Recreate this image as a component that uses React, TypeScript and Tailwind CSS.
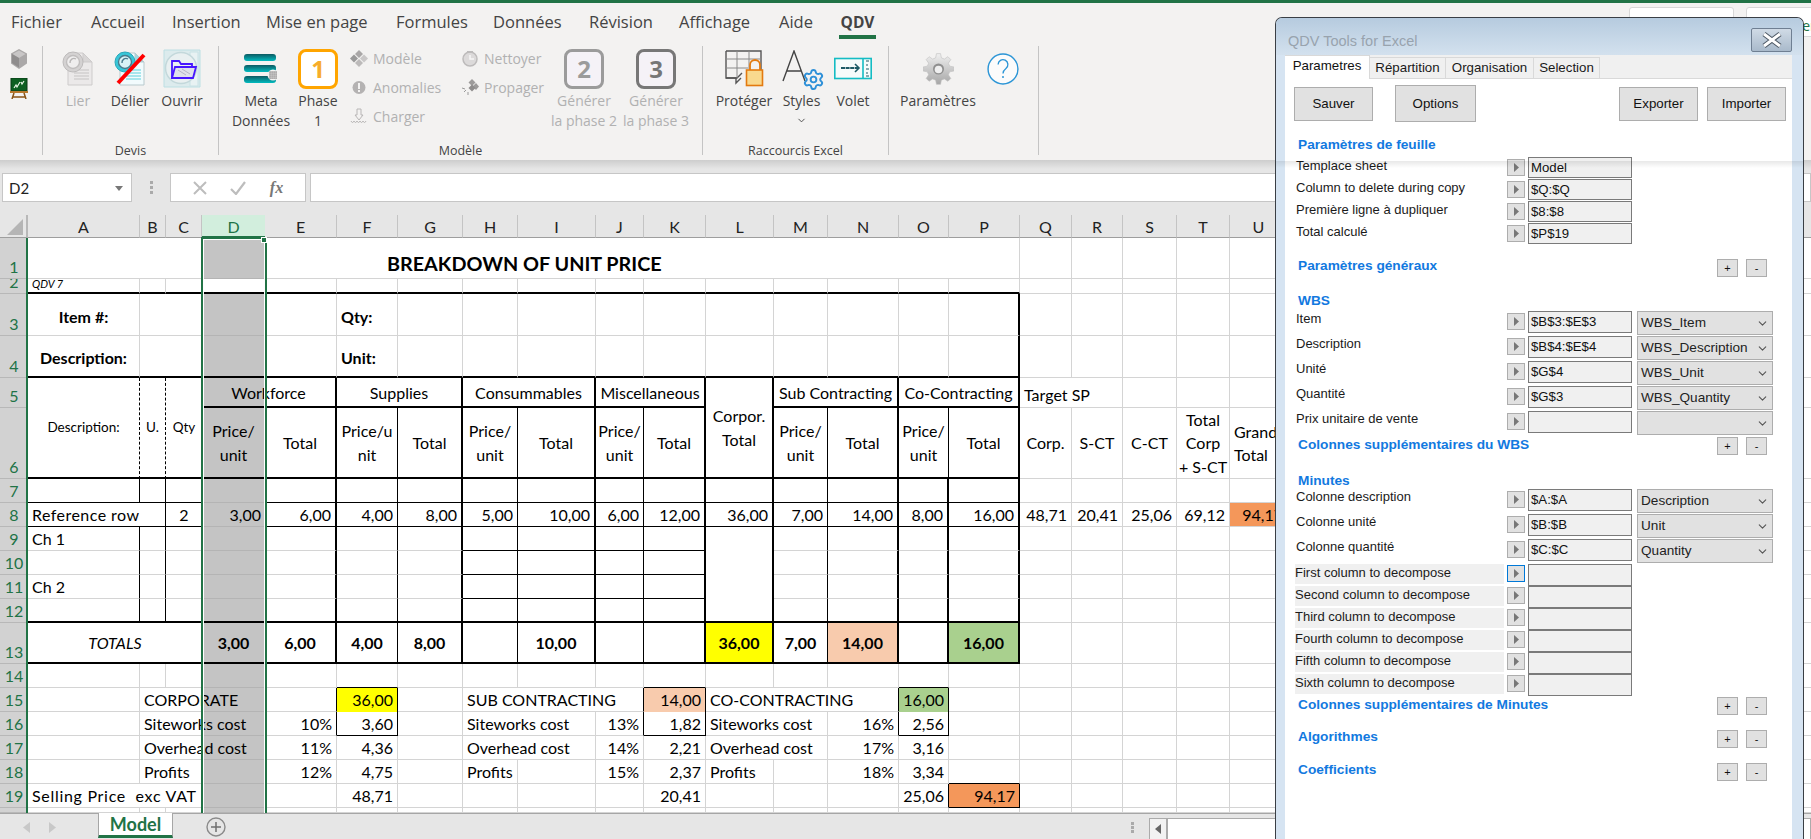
import React from 'react';
import { ChevronDown, Settings } from 'lucide-react';

type Cell = { t?: string; r?: string; b?: string; a?: 'l' | 'r' | 'c'; cls?: string; span?: number; tall?: boolean };
type RowDef = Record<string, Cell>;

const RM: Record<string, string> = {
  g: 'border-r border-r-[#d4d4d4]',
  k: 'border-r border-r-black',
  K: 'border-r-2 border-r-black',
  n: '',
  d: 'border-r border-r-black [border-right-style:dashed]',
};
const BM: Record<string, string> = {
  g: 'border-b border-b-[#d4d4d4]',
  k: 'border-b border-b-black',
  K: 'border-b-2 border-b-black',
  n: '',
  s: 'border-b border-b-[#b4b4b4]',
};
const AM = { l: 'justify-start text-left', r: 'justify-end text-right', c: 'justify-center text-center' };
const SPAN: Record<number, string> = { 2: 'col-span-2', 3: 'col-span-3', 12: 'col-span-12' };
const COLS = 'ABCDEFGHIJKLMNOPQRSTU'.split('');
const VERT: Record<string, string> = { A: 'k', B: 'k', C: 'n', D: 'n', E: 'K', F: 'k', G: 'K', H: 'k', I: 'K', J: 'k', K: 'K', L: 'K', M: 'k', N: 'K', O: 'K', P: 'K' };

const band = (bottom: string, over: RowDef = {}): RowDef => {
  const res: RowDef = {};
  'ABCDEFGHIJKLMNOP'.split('').forEach((c) => {
    res[c] = { r: VERT[c], b: c === 'D' && bottom !== 'K' ? 's' : bottom };
  });
  Object.keys(over).forEach((k) => {
    res[k] = { ...res[k], ...over[k] };
  });
  return res;
};

const v = (t: string, extra: Cell = {}): Cell => ({ t, a: 'r', ...extra });
const bold = 'font-bold pt-[1px]';
const boldLow = 'font-bold pt-[4px]';
const priceUnit = 'Price/\nunit';

const midLines: RowDef = { H: { b: 'k' }, I: { b: 'k' }, J: { b: 'k' }, K: { b: 'k' }, L: { b: 'n' } };
const grey = (bot: RowDef) => band('g', bot);

const SHEET: { h: string; n: string; def: RowDef; noCols?: string[] }[] = [
  { h: '1', n: '1', def: { A: { span: 3, r: 'n' }, E: { span: 12, t: 'BREAKDOWN OF UNIT PRICE', a: 'l', cls: 'pl-[122px] pt-[12px] font-bold text-[19.8px]' } } },
  {
    h: '2', n: '2',
    def: {
      A: { t: 'QDV 7', a: 'l', cls: 'italic text-[11px] pb-[3px]', b: 'K' }, B: { b: 'K' }, C: { b: 'K', r: 'n' }, D: { b: 'K', cls: 'bg-white' }, E: { b: 'K' }, F: { b: 'K' }, G: { b: 'K' }, H: { b: 'K' }, I: { b: 'K' }, J: { b: 'K' }, K: { b: 'K' }, L: { b: 'K' }, M: { b: 'K' }, N: { b: 'K' }, O: { b: 'K' }, P: { b: 'K' },
    },
  },
  { h: '3', n: '3', def: { A: { t: 'Item #:', a: 'c', cls: boldLow }, B: { span: 2, r: 'n' }, F: { t: 'Qty:', a: 'l', cls: boldLow }, P: { r: 'K' } } },
  {
    h: '4', n: '4',
    def: {
      A: { t: 'Description:', a: 'c', cls: boldLow, b: 'K' }, B: { span: 2, r: 'n', b: 'K' }, D: { b: 'K' }, E: { b: 'K' }, F: { t: 'Unit:', a: 'l', cls: boldLow, b: 'K' }, G: { b: 'K' }, H: { b: 'K' }, I: { b: 'K' }, J: { b: 'K' }, K: { b: 'K' }, L: { b: 'K' }, M: { b: 'K' }, N: { b: 'K' }, O: { b: 'K' }, P: { r: 'K', b: 'K' },
    },
  },
  {
    h: '5', n: '5',
    def: {
      A: { t: 'Description:', a: 'c', tall: true, r: 'd', b: 'K', cls: 'text-[13.5px]' },
      B: { t: 'U.', a: 'c', tall: true, r: 'd', b: 'K', cls: 'text-[13.5px]' },
      C: { t: 'Qty', a: 'c', tall: true, r: 'n', b: 'K', cls: 'text-[13.5px]' },
      D: { t: 'Workforce', a: 'c', span: 2, r: 'K', b: 'K', cls: 'pt-[1px] bg-[linear-gradient(to_right,#c4c4c4_63px,transparent_63px)]' },
      F: { t: 'Supplies', a: 'c', span: 2, r: 'K', b: 'K', cls: 'pt-[1px]' },
      H: { t: 'Consummables', a: 'c', span: 2, r: 'K', b: 'K', cls: 'pt-[1px]' },
      J: { t: 'Miscellaneous', a: 'c', span: 2, r: 'K', b: 'K', cls: 'pt-[1px]' },
      L: { t: 'Corpor.\nTotal', a: 'c', tall: true, r: 'K', b: 'K' },
      M: { t: 'Sub Contracting', a: 'c', span: 2, r: 'K', b: 'K', cls: 'pt-[1px]' },
      O: { t: 'Co-Contracting', a: 'c', span: 2, r: 'K', b: 'K', cls: 'pt-[1px]' },
      Q: { t: 'Target SP', a: 'l', r: 'n', cls: 'pt-[5px]' },
    },
  },
  {
    h: '6', n: '6', noCols: ['A', 'B', 'C', 'L'],
    def: {
      D: { t: priceUnit, a: 'c', r: 'n', b: 'K' }, E: { t: 'Total', a: 'c', r: 'K', b: 'K' },
      F: { t: 'Price/u\nnit', a: 'c', r: 'k', b: 'K' }, G: { t: 'Total', a: 'c', r: 'K', b: 'K' },
      H: { t: priceUnit, a: 'c', r: 'k', b: 'K' }, I: { t: 'Total', a: 'c', r: 'K', b: 'K' },
      J: { t: priceUnit, a: 'c', r: 'k', b: 'K' }, K: { t: 'Total', a: 'c', r: 'K', b: 'K' },
      M: { t: priceUnit, a: 'c', r: 'k', b: 'K' }, N: { t: 'Total', a: 'c', r: 'K', b: 'K' },
      O: { t: priceUnit, a: 'c', r: 'k', b: 'K' }, P: { t: 'Total', a: 'c', r: 'K', b: 'K' },
      Q: { t: 'Corp.', a: 'c' }, R: { t: 'S-CT', a: 'c' }, S: { t: 'C-CT', a: 'c' }, T: { t: 'Total\nCorp\n+ S-CT', a: 'c' }, U: { t: 'Grand\nTotal', a: 'l' },
    },
  },
  { h: '7', n: '7', def: band('k', { O: { r: 'K' } }) },
  {
    h: '8', n: '8',
    def: band('k', {
      A: { t: 'Reference row', a: 'l', span: 2, r: 'k', cls: 'tracking-[0.45px]' }, C: { t: '2', a: 'c' }, D: v('3,00'), E: v('6,00'), F: v('4,00'), G: v('8,00'), H: v('5,00'), I: v('10,00'), J: v('6,00'), K: v('12,00'), L: v('36,00'), M: v('7,00'), N: v('14,00'), O: v('8,00'), P: v('16,00'),
      Q: v('48,71'), R: v('20,41'), S: v('25,06'), T: v('69,12'), U: { t: '94,17', a: 'r', cls: 'bg-[#f4975a]' },
    }),
  },
  { h: '9', n: '9', def: grey({ A: { t: 'Ch 1', a: 'l' }, ...midLines }) },
  { h: '10', n: '10', def: grey(midLines) },
  { h: '11', n: '11', def: grey({ A: { t: 'Ch 2', a: 'l' }, ...midLines }) },
  { h: '12', n: '12', def: band('K', {}) },
  {
    h: '13', n: '13',
    def: band('K', {
      A: { t: 'TOTALS', a: 'c', span: 3, r: 'n', cls: 'italic' },
      D: { t: '3,00', a: 'c', cls: bold }, E: { t: '6,00', a: 'c', cls: bold }, F: { t: '4,00', a: 'c', cls: bold }, G: { t: '8,00', a: 'c', cls: bold }, I: { t: '10,00', a: 'c', cls: bold },
      L: { t: '36,00', a: 'c', cls: 'font-bold pt-[1px] bg-[#ffff00]' }, M: { t: '7,00', a: 'c', cls: bold }, N: { t: '14,00', a: 'c', cls: 'font-bold pt-[1px] bg-[#f8cbad]' }, P: { t: '16,00', a: 'c', cls: 'font-bold pt-[1px] bg-[#a9d08e]' },
    }),
  },
  { h: '14', n: '14', def: { C: { r: 'n' }, F: { b: 'k' }, K: { b: 'k' }, O: { b: 'k' } } },
  {
    h: '15', n: '15',
    def: {
      B: { t: 'CORPORATE', a: 'l', r: 'n' }, C: { r: 'n' }, E: { r: 'k' }, F: { t: '36,00', a: 'r', r: 'k', b: 'n', cls: 'bg-[#ffff00]' },
      G: { r: 'g' }, H: { t: 'SUB CONTRACTING', a: 'l', r: 'n' }, I: { r: 'n' }, J: { r: 'k' }, K: { t: '14,00', a: 'r', r: 'k', b: 'n', cls: 'bg-[#f8cbad]' },
      L: { t: 'CO-CONTRACTING', a: 'l', r: 'n' }, M: { r: 'n' }, N: { r: 'k' }, O: { t: '16,00', a: 'r', r: 'k', b: 'n', cls: 'bg-[#a9d08e]' },
    },
  },
  {
    h: '16', n: '16',
    def: {
      B: { t: 'Siteworks cost', a: 'l', r: 'n' }, C: { r: 'n' }, E: { t: '10%', a: 'r', r: 'k' }, F: { t: '3,60', a: 'r', r: 'k', b: 'k' },
      H: { t: 'Siteworks cost', a: 'l', r: 'n' }, J: { t: '13%', a: 'r', r: 'k' }, K: { t: '1,82', a: 'r', r: 'k', b: 'k' },
      L: { t: 'Siteworks cost', a: 'l', r: 'n' }, N: { t: '16%', a: 'r', r: 'k' }, O: { t: '2,56', a: 'r', r: 'k', b: 'k' },
    },
  },
  {
    h: '17', n: '17',
    def: {
      B: { t: 'Overhead cost', a: 'l', r: 'n' }, C: { r: 'n' }, E: v('11%'), F: v('4,36'),
      H: { t: 'Overhead cost', a: 'l', r: 'n' }, J: v('14%'), K: v('2,21'),
      L: { t: 'Overhead cost', a: 'l', r: 'n' }, N: v('17%'), O: v('3,16'),
    },
  },
  {
    h: '18', n: '18',
    def: {
      B: { t: 'Profits', a: 'l', r: 'n' }, C: { r: 'n' }, E: v('12%'), F: v('4,75'),
      H: { t: 'Profits', a: 'l' }, J: v('15%'), K: v('2,37'),
      L: { t: 'Profits', a: 'l' }, N: v('18%'), O: v('3,34'), P: { b: 'k' },
    },
  },
  {
    h: '19', n: '19',
    def: {
      A: { t: 'Selling Price  exc VAT', a: 'l', r: 'n', cls: 'tracking-[0.7px]' }, B: { r: 'n' }, C: { r: 'n' }, F: v('48,71'), K: v('20,41'), O: v('25,06', { r: 'k' }),
      P: { t: '94,17', a: 'r', r: 'k', b: 'k', cls: 'bg-[#f4975a]' },
    },
  },
  { h: '20', n: '', def: { C: { r: 'n' } } },
];

function SheetCells() {
  const out: React.ReactNode[] = [];
  out.push(
    <div key="corner" className="flex items-end justify-end pr-[3px] pb-[2px] bg-[#e6e6e6] border-b border-b-[#9e9e9e] border-r-2 border-r-[#b8b8b8]">
      <svg width="16" height="16" viewBox="0 0 16 16"><polygon points="16,0 16,16 0,16" fill="#b5b5b5" /></svg>
    </div>
  );
  COLS.forEach((c) => {
    const sel = c === 'D';
    out.push(
      <div key={'h' + c} className={sel ? 'flex items-center justify-center pt-[2px] text-[16px] bg-[#d2eedd] text-[#217346] border-b-2 border-b-[#217346]' : 'flex items-center justify-center pt-[2px] text-[16px] text-[#222] bg-[#e6e6e6] border-b border-b-[#9e9e9e] border-r border-r-[#c4c4c4]'}>
        {c}
      </div>
    );
  });
  out.push(<div key="hfill" className="bg-[#e6e6e6] border-b border-b-[#9e9e9e]" />);

  SHEET.forEach((row) => {
    out.push(
      <div key={'n' + row.h} className="flex items-end justify-center overflow-hidden bg-[#d2d2d2] text-[#217346] text-[16px] leading-[20px] pb-[1px] border-b border-b-[#b8b8b8]">
        {row.n}
      </div>
    );
    let i = 0;
    while (i < COLS.length) {
      const c = COLS[i];
      if (row.noCols && row.noCols.includes(c)) {
        i += 1;
        continue;
      }
      const isD = c === 'D';
      const d = row.def[c] || {};
      const r = d.r ?? (isD ? 'n' : 'g');
      const b = d.b ?? (isD ? 's' : 'g');
      const span = d.span ?? 1;
      const a = d.a ?? 'l';
      const gray = isD && span === 1 && !(d.cls && d.cls.includes('bg-white'));
      out.push(
        <div
          key={row.h + c}
          className={[
            'flex items-center px-[4px] min-w-0 leading-[23.5px]',
            AM[a],
            RM[r],
            BM[b],
            span > 1 ? SPAN[span] : '',
            d.tall ? 'row-span-2' : '',
            gray ? 'bg-[#c4c4c4]' : '',
            d.cls ?? '',
          ].join(' ')}
        >
          {d.t ? <span className="relative z-[1] whitespace-pre shrink-0">{d.t}</span> : null}
        </div>
      );
      i += span;
    }
    out.push(<div key={row.h + 'fill'} className="border-b border-b-[#d4d4d4]" />);
  });
  return <>{out}</>;
}

function gearPath(cx: number, cy: number, ro: number, ri: number, n: number) {
  let d = '';
  for (let k = 0; k < n; k++) {
    const s = (Math.PI * 2) / n;
    const a = k * s - Math.PI / 2;
    const pts = [
      [ri, a - s * 0.32],
      [ro, a - s * 0.17],
      [ro, a + s * 0.17],
      [ri, a + s * 0.32],
    ];
    pts.forEach((p, j) => {
      const x = (cx + p[0] * Math.cos(p[1])).toFixed(2);
      const y = (cy + p[0] * Math.sin(p[1])).toFixed(2);
      d += (k === 0 && j === 0 ? 'M' : 'L') + x + ' ' + y + ' ';
    });
  }
  return d + 'Z';
}

function DocIcon({ active }: { active: boolean }) {
  const paper = active ? '#f2fbfd' : '#ebe9e9';
  const edge = active ? '#b9c9cd' : '#cdcbcb';
  const line = active ? '#8fdfe8' : '#d2d0d0';
  const disc = active ? '#38c6d8' : '#d4d2d2';
  const inner = active ? '#d8f2f6' : '#efeeee';
  return (
    <svg width="32" height="35" viewBox="0 0 32 35">
      <path d="M6 2h15l9 9v23H6z" fill={paper} stroke={edge} />
      <path d="M21 2v9h9z" fill={active ? '#9ed8e0' : '#d8d6d6'} stroke={edge} />
      <path d="M12 19h15M12 22h15M12 25h15M12 28h15" stroke={line} strokeWidth="1.4" />
      <circle cx="11" cy="11" r="10" fill={disc} stroke={active ? '#2aa8ba' : '#bdbbbb'} />
      <circle cx="11" cy="11" r="6.5" fill={inner} stroke={active ? '#487a8c' : '#c0bebe'} strokeWidth="1.4" />
      <path d="M8 12a4 4 0 0 1 6-4" fill="none" stroke={active ? '#487a8c' : '#b8b6b6'} strokeWidth="1.4" />
      {active ? <line x1="4" y1="32" x2="30" y2="4" stroke="#ff0000" strokeWidth="4" /> : null}
    </svg>
  );
}

function FolderDoc() {
  return (
    <svg width="38" height="39" viewBox="0 0 38 39">
      <path d="M1 1h36v37H1z" fill="#dcebed" stroke="#bcdfe3" />
      <path d="M27 3h8v34h-8z" fill="#e8f2f3" stroke="#c8e2e5" />
      <circle cx="18" cy="19" r="15.5" fill="#e9f0f1" stroke="#c3d8db" strokeWidth="1.5" />
      <path d="M9 29V12h7l2 3h11v3" fill="none" stroke="#4616ff" strokeWidth="1.8" />
      <path d="M9 29l3-11h21l-3 11z" fill="#dfe0ea" stroke="#4616ff" strokeWidth="1.8" />
      <path d="M15 21l8 5M19 20l8 5" stroke="#b5b5c8" />
    </svg>
  );
}

function MetaIcon() {
  return (
    <svg width="35" height="30" viewBox="0 0 35 30">
      <defs>
        <linearGradient id="tl" x1="0" y1="0" x2="0" y2="1">
          <stop offset="0" stopColor="#0c5a62" />
          <stop offset="1" stopColor="#00bcc0" />
        </linearGradient>
      </defs>
      <rect x="0" y="0" width="32" height="7" rx="3" fill="url(#tl)" />
      <rect x="0" y="11" width="32" height="7" rx="3" fill="url(#tl)" />
      <rect x="0" y="22" width="32" height="7" rx="3" fill="url(#tl)" />
      <circle cx="29" cy="21" r="5.5" fill="#f3f2f1" />
      <g fill="#666">
        {[26, 28, 30, 32].map((x) => [18, 20, 22, 24].map((y) => <rect key={x + '-' + y} x={x - 0.6} y={y - 0.6} width="1.3" height="1.3" />))}
      </g>
    </svg>
  );
}

function Diamonds() {
  return (
    <svg width="18" height="17" viewBox="0 0 18 17" className="shrink-0">
      <g fill="#bcbaba">
        <path d="M9 0l4 4-4 4-4-4z" fill="#a9a7a7" />
        <path d="M4 4.5l4 4-4 4-4-4z" fill="#999" />
        <path d="M14 4.5l4 4-4 4-4-4z" fill="#c9c7c7" />
        <path d="M9 9l4 4-4 4-4-4z" />
      </g>
    </svg>
  );
}
function Warn() {
  return (
    <svg width="18" height="17" viewBox="0 0 18 17" className="shrink-0">
      <circle cx="9" cy="8.5" r="6.5" fill="#b4b2b2" />
      <rect x="8" y="4" width="2" height="6" fill="#f3f2f1" />
      <rect x="8" y="11" width="2" height="2" fill="#f3f2f1" />
    </svg>
  );
}
function Load() {
  return (
    <svg width="18" height="17" viewBox="0 0 18 17" className="shrink-0" fill="none" stroke="#b8b6b6">
      <path d="M7 1h4v6h2l-4 5-4-5h2z" />
      <path d="M1 13c1 2 2 2 3 0 1 2 2 2 3 0 1 2 2 2 3 0 1 2 2 2 3 0 1 2 2 2 3 0" />
    </svg>
  );
}
function Clean() {
  return (
    <svg width="18" height="17" viewBox="0 0 18 17" className="shrink-0">
      <circle cx="9" cy="9" r="7" fill="#dcdada" stroke="#bdbbbb" strokeWidth="1.5" />
      <path d="M6 1h6v2H6z" fill="#bdbbbb" />
      <path d="M9 5v4h4" fill="none" stroke="#f6f6f6" strokeWidth="1.5" />
    </svg>
  );
}
function Spread() {
  return (
    <svg width="18" height="17" viewBox="0 0 18 17" className="shrink-0">
      <g fill="#9d9b9b">
        <path d="M11 0l3.5 3.5L11 7 7.5 3.5z" />
        <path d="M15 4l3 3.5-3 3.5-3.5-3.5z" />
        <path d="M11 5.5l3.5 3.5L11 12.5 7.5 9z" fill="#8f8d8d" />
      </g>
      <path d="M1 9l3 1M3 13l2-2M7 16l0-3" stroke="#999" fill="none" />
    </svg>
  );
}

function Protect() {
  return (
    <svg width="39" height="37" viewBox="0 0 39 37">
      <path d="M1 1h35v22M1 1v27h11l5-5" fill="none" stroke="#555" strokeWidth="1.4" />
      <path d="M1 9h35M1 18h24M12 1v27M24 1v16" stroke="#8a8a8a" fill="none" />
      <path d="M1 28h10v5l5-5" fill="none" stroke="#555" strokeWidth="1.4" />
      <path d="M25 20v-5a5 5 0 0 1 10 0v5" fill="none" stroke="#e37a10" strokeWidth="1.8" />
      <rect x="21.5" y="20" width="16" height="15.5" fill="#f9d98e" stroke="#e37a10" strokeWidth="1.6" />
    </svg>
  );
}
function StylesIcon() {
  return (
    <div className="relative w-[40px] h-[38px]">
      <svg width="24" height="32" viewBox="0 0 24 32">
        <path d="M1 31L12 1l11 30M5 21h14" fill="none" stroke="#444" strokeWidth="1.4" />
      </svg>
      <Settings size={23} strokeWidth={2} className="absolute right-[-3px] bottom-[-3px] text-[#2e90d8]" />
    </div>
  );
}
function VoletIcon() {
  return (
    <svg width="38" height="23" viewBox="0 0 38 23">
      <rect x="0.8" y="1.5" width="36.4" height="20" fill="#f6fbfb" stroke="#14bcc4" strokeWidth="1.6" />
      <path d="M29 1v21" stroke="#14bcc4" strokeWidth="1.6" />
      <path d="M7 11h17" stroke="#1d5a66" strokeWidth="1.8" strokeDasharray="4 0.6" />
      <path d="M21 7l4 4-4 4" fill="none" stroke="#1d5a66" strokeWidth="1.6" />
      <path d="M32 4h3M32 8h2M32 12h3M32 16h2M32 19h3" stroke="#1d5a66" strokeWidth="1.2" />
    </svg>
  );
}
function GearIcon() {
  return (
    <svg width="31" height="32" viewBox="0 0 31 32">
      <defs>
        <linearGradient id="gg" x1="0" y1="0" x2="0" y2="1">
          <stop offset="0" stopColor="#f0f0f0" />
          <stop offset="1" stopColor="#a6a6a6" />
        </linearGradient>
      </defs>
      <path d={gearPath(15.5, 16, 15.5, 11.5, 8)} fill="url(#gg)" stroke="#c0c0c0" strokeWidth="0.6" />
      <circle cx="15.5" cy="16" r="5.5" fill="#8f8f8f" />
      <circle cx="15.5" cy="16.5" r="3.8" fill="#efefef" />
    </svg>
  );
}
function HelpIcon() {
  return (
    <svg width="36" height="36" viewBox="0 0 36 36">
      <circle cx="18" cy="18" r="16.8" fill="#fbfbfb" stroke="#2b95d6" strokeWidth="1.6" />
      <path d="M12.5 13a5.5 5.5 0 1 1 8.8 4.4C19 19.2 18 20.4 18 23" fill="none" stroke="#2b95d6" strokeWidth="1.5" />
      <circle cx="18" cy="27" r="1.1" fill="#2b95d6" />
    </svg>
  );
}
function Cube() {
  return (
    <svg width="18" height="20" viewBox="0 0 18 20">
      <path d="M9 0l8 4.5v10L9 20l-8-5.5v-10z" fill="#aaa8a8" />
      <path d="M9 1.5l6.5 3.5L9 9 2.5 5z" fill="#c8c6c6" />
      <path d="M9 9v9.5L2 14V5z" fill="#8f8d8d" />
    </svg>
  );
}
function Board() {
  return (
    <svg width="18" height="21" viewBox="0 0 18 21">
      <rect x="1" y="0" width="16" height="13" fill="#0d5f22" stroke="#0b3a16" />
      <path d="M4 10l2-3 1 2 3-5M11 4l1 2 2-3" fill="none" stroke="#e8f3e6" strokeWidth="1.2" />
      <path d="M0 13h18v2H0z" fill="#b9792d" />
      <path d="M4 15L2 21M14 15l2 6M3 19h12" stroke="#8a5417" strokeWidth="1.5" />
    </svg>
  );
}

const TABS: [string, string][] = [
  ['Fichier', 'w-[80px]'],
  ['Accueil', 'w-[81px]'],
  ['Insertion', 'w-[94px]'],
  ['Mise en page', 'w-[130px]'],
  ['Formules', 'w-[97px]'],
  ['Données', 'w-[96px]'],
  ['Révision', 'w-[90px]'],
  ['Affichage', 'w-[100px]'],
  ['Aide', 'w-[60px]'],
];

function BigBtn({ w, icon, l1, l2, off, extra }: { w: string; icon: React.ReactNode; l1: string; l2?: string; off?: boolean; extra?: React.ReactNode }) {
  return (
    <div className={`${w} shrink-0 flex flex-col items-center ${off ? 'text-[#b1b1b1]' : 'text-[#444]'}`}>
      <div className="h-[45px] w-full flex items-center justify-center">{icon}</div>
      <div className="leading-[20px] whitespace-nowrap">{l1}</div>
      {l2 ? <div className="leading-[20px] whitespace-nowrap">{l2}</div> : null}
      {extra}
    </div>
  );
}
function SmallBtn({ icon, label }: { icon: React.ReactNode; label: string }) {
  return (
    <div className="h-[29px] flex items-center gap-[5px] text-[#b1b1b1] whitespace-nowrap">
      {icon}
      <span>{label}</span>
    </div>
  );
}
function Group({ w, label, children }: { w: string; label?: string; children?: React.ReactNode }) {
  return (
    <div className={`${w} h-[109px] shrink-0 border-r border-r-[#c4c4c4] flex flex-col`}>
      <div className="h-[97px] shrink-0 flex items-start">{children}</div>
      <div className="h-[16px] shrink-0 leading-[16px] text-center text-[12.5px] text-[#444]">{label}</div>
    </div>
  );
}
function NumBox({ n, cls }: { n: string; cls: string }) {
  return <div className={`w-[40px] h-[40px] rounded-[8px] border-[3px] flex items-center justify-center font-bold text-[24px] ${cls}`}>{n}</div>;
}

function Ribbon() {
  return (
    <div className="h-[157px] bg-[#f3f2f1] font-['Open_Sans',sans-serif] text-[14px] relative">
      <div className="h-[43px] flex pl-[11px] pt-[9px] text-[16.5px] text-[#444]">
        {TABS.map(([t, w]) => (
          <div key={t} className={`${w} shrink-0 leading-[20px]`}>{t}</div>
        ))}
        <div className="w-[37px] shrink-0 flex flex-col items-center">
          <div className="leading-[20px] font-bold text-[15.5px]">QDV</div>
          <div className="mt-[3px] h-[4px] w-full bg-[#217346]" />
        </div>
      </div>
      <div className="absolute left-[1629px] top-[4px] w-[105px] h-[30px] bg-white border border-[#d8d8d8] rounded-[3px] pl-[18px] pt-[8px] text-[#217346] leading-[20px]">Partager</div>
      <div className="absolute left-[1746px] top-[4px] w-[110px] h-[30px] bg-white border border-[#d8d8d8] rounded-[3px] pl-[12px] pt-[8px] text-[#217346] leading-[20px] whitespace-nowrap">Commentaires</div>

      <div className="flex">
        <div className="w-[43px] h-[109px] shrink-0 border-r border-r-[#c4c4c4] flex flex-col items-center pt-[3px] gap-[9px] pr-[5px]">
          <Cube />
          <Board />
        </div>
        <Group w="w-[176px]" label="Devis">
          <div className="flex pl-[9px]">
            <BigBtn w="w-[52px]" off icon={<DocIcon active={false} />} l1="Lier" />
            <BigBtn w="w-[52px]" icon={<DocIcon active />} l1="Délier" />
            <BigBtn w="w-[52px]" icon={<FolderDoc />} l1="Ouvrir" />
          </div>
        </Group>
        <Group w="w-[484px]" label="Modèle">
          <div className="flex pl-[6px]">
            <BigBtn w="w-[72px]" icon={<MetaIcon />} l1="Meta" l2="Données" />
            <BigBtn w="w-[42px]" icon={<div className="w-[40px] h-[40px] bg-white rounded-[8px] border-[3px] border-[#ffa500] flex items-center justify-center font-bold text-[24px] text-[#f7ad2b]">1</div>} l1="Phase" l2="1" />
            <div className="w-[107px] ml-[11px] shrink-0 -mt-[2px]">
              <SmallBtn icon={<Diamonds />} label="Modèle" />
              <SmallBtn icon={<Warn />} label="Anomalies" />
              <SmallBtn icon={<Load />} label="Charger" />
            </div>
            <div className="w-[85px] ml-[4px] shrink-0 -mt-[2px]">
              <SmallBtn icon={<Clean />} label="Nettoyer" />
              <SmallBtn icon={<Spread />} label="Propager" />
            </div>
            <BigBtn w="w-[76px]" off icon={<NumBox n="2" cls="bg-[#f5f2f7] border-[#9b9b9b] text-[#9b9b9b]" />} l1="Générer" l2="la phase 2" />
            <BigBtn w="w-[68px]" off icon={<NumBox n="3" cls="bg-[#f5f2f7] border-[#777] text-[#777]" />} l1="Générer" l2="la phase 3" />
          </div>
        </Group>
        <Group w="w-[186px]" label="Raccourcis Excel">
          <div className="flex pl-[11px]">
            <BigBtn w="w-[60px]" icon={<Protect />} l1="Protéger" />
            <BigBtn w="w-[55px]" icon={<StylesIcon />} l1="Styles" extra={<ChevronDown size={11} className="mt-[4px] text-[#444]" />} />
            <BigBtn w="w-[48px]" icon={<VoletIcon />} l1="Volet" />
          </div>
        </Group>
        <Group w="w-[150px]">
          <BigBtn w="w-[98px]" icon={<GearIcon />} l1="Paramètres" />
          <div className="w-[32px] h-[45px] flex items-center justify-center"><HelpIcon /></div>
        </Group>
      </div>
    </div>
  );
}

function FormulaBar() {
  return (
    <div className="h-[55px] bg-[linear-gradient(to_bottom,#cdcdcd,#e6e6e6_9px)] pt-[13px] flex items-start font-['Lato',sans-serif]">
      <div className="ml-[2px] w-[130px] h-[29px] bg-white border border-[#c6c6c6] flex items-center justify-between pl-[6px] pr-[8px] pt-[1px] text-[15px] text-[#222]">
        <span>D2</span>
        <svg width="8" height="5" viewBox="0 0 8 5"><polygon points="0,0 8,0 4,5" fill="#777" /></svg>
      </div>
      <div className="w-[38px] h-[29px] flex flex-col items-center justify-center gap-[2px]">
        <div className="w-[3px] h-[3px] bg-[#aaa]" />
        <div className="w-[3px] h-[3px] bg-[#aaa]" />
        <div className="w-[3px] h-[3px] bg-[#aaa]" />
      </div>
      <div className="w-[136px] h-[29px] bg-white border border-[#c6c6c6] flex items-center justify-around px-[10px]">
        <svg width="14" height="14" viewBox="0 0 14 14"><path d="M1 1l12 12M13 1L1 13" stroke="#bdbdbd" strokeWidth="2" /></svg>
        <svg width="16" height="14" viewBox="0 0 16 14"><path d="M1 8l5 5L15 1" fill="none" stroke="#bdbdbd" strokeWidth="2.2" /></svg>
        <span className="font-['Liberation_Serif',serif] italic font-bold text-[16px] text-[#777]">fx</span>
      </div>
      <div className="ml-[4px] flex-1 h-[29px] bg-white border border-[#c6c6c6]" />
    </div>
  );
}

function Sheet() {
  return (
    <div className="relative h-[598px] overflow-hidden bg-white text-black text-[16px] font-['Lato',sans-serif] grid grid-cols-[28px_112px_26px_36px_63px_72px_61px_65px_55px_78px_48px_62px_68px_54px_71px_50px_71px_52px_51px_54px_53px_58px_1fr] grid-rows-[23px_41px_15px_42px_42px_30px_71px_24px_24px_24px_24px_24px_24px_41px_24px_24px_24px_24px_24px_24px_5px]">
      <SheetCells />
      <div className="absolute left-[26px] top-[23px] bottom-0 w-[2px] bg-[#217346] z-[2]" />
      <div className="absolute left-[201px] top-[22px] bottom-0 w-[66px] border-x-2 border-t-2 border-[#217346] z-[2]">
        <div className="h-full border-x border-t border-white" />
      </div>
      <div className="absolute left-[261px] top-[22px] w-[6px] h-[6px] bg-[#217346] border border-white z-[3]" />
    </div>
  );
}

function BottomBar() {
  return (
    <div className="h-[26px] bg-[#e6e6e6] border-t border-t-[#a6a6a6] flex items-start font-['Lato',sans-serif] relative">
      <div className="w-[98px] flex items-center gap-[19px] pl-[23px] pt-[8px]">
        <svg width="7" height="11" viewBox="0 0 7 11"><polygon points="7,0 7,11 0,5.5" fill="#c8c8c8" /></svg>
        <svg width="7" height="11" viewBox="0 0 7 11"><polygon points="0,0 0,11 7,5.5" fill="#c8c8c8" /></svg>
      </div>
      <div className="w-[75px] h-[25px] bg-white border-x border-x-[#a6a6a6] border-b-[3px] border-b-[#217346] flex items-center justify-center font-bold text-[18px] leading-[20px] text-[#217346] -mt-[1px]">Model</div>
      <div className="ml-[33px] mt-[3px]">
        <svg width="20" height="20" viewBox="0 0 20 20"><circle cx="10" cy="10" r="9" fill="none" stroke="#8a8a8a" strokeWidth="1.4" /><path d="M10 5v10M5 10h10" stroke="#707070" strokeWidth="1.5" /></svg>
      </div>
      <div className="ml-[905px] mt-[8px] flex flex-col gap-[1px]">
        <div className="w-[3px] h-[3px] bg-[#aaa]" />
        <div className="w-[3px] h-[3px] bg-[#aaa]" />
        <div className="w-[3px] h-[3px] bg-[#aaa]" />
      </div>
      <div className="ml-[15px] mt-[4px] flex-1 h-[22px] bg-white border border-[#ababab] flex">
        <div className="w-[18px] border-r-2 border-r-[#ababab] bg-[#f2f2f2] flex items-center justify-center">
          <svg width="6" height="10" viewBox="0 0 6 10"><polygon points="6,0 6,10 0,5" fill="#666" /></svg>
        </div>
      </div>
    </div>
  );
}

function ArrowBtn({ focus, cls }: { focus?: boolean; cls: string }) {
  return (
    <div className={`${cls} w-[18px] h-[17px] shrink-0 flex items-center justify-center bg-[#e1e1e1] border ${focus ? 'border-[#0078d7]' : 'border-[#adadad]'}`}>
      <svg width="5" height="9" viewBox="0 0 5 9"><polygon points="0,0 5,4.5 0,9" fill="#777" /></svg>
    </div>
  );
}
function Input({ value, cls }: { value?: string; cls: string }) {
  return <div className={`${cls} shrink-0 bg-[#f0f0f0] border-[1.5px] border-[#7a7a7a] pl-[2px] leading-[20px] text-[13.2px] text-[#111] whitespace-nowrap`}>{value}</div>;
}
function Select({ value }: { value?: string }) {
  return (
    <div className="ml-[5px] w-[136px] h-[24px] shrink-0 bg-[#e1e1e1] border border-[#adadad] flex items-center justify-between pl-[3px] pr-[3px] text-[13.6px] text-[#222] whitespace-nowrap">
      <span>{value}</span>
      <ChevronDown size={13} className="text-[#555]" />
    </div>
  );
}
function Heading({ t, cls }: { t: string; cls: string }) {
  return <div className={`${cls} ml-[13px] h-[18px] leading-[18px] font-bold text-[13.7px] text-[#1279e0] whitespace-nowrap`}>{t}</div>;
}
function HeadingRow({ t, cls, btn }: { t: string; cls: string; btn: string }) {
  return (
    <div className={`${cls} h-[20px] flex`}>
      <div className="w-[432px] shrink-0 pl-[13px] leading-[18px] font-bold text-[13.7px] text-[#1279e0] whitespace-nowrap">{t}</div>
      <MiniBtn t="+" cls={btn} />
      <MiniBtn t="-" cls={`ml-[8px] ${btn}`} />
    </div>
  );
}
function MiniBtn({ t, cls }: { t: string; cls: string }) {
  return <div className={`${cls} w-[21px] h-[18px] shrink-0 bg-[#e1e1e1] border border-[#adadad] flex items-center justify-center text-[11px] leading-none text-[#111]`}>{t}</div>;
}
function PlainRow({ label, value }: { label: string; value: string }) {
  return (
    <div className="h-[22px] flex pl-[11px]">
      <div className="w-[211px] shrink-0 leading-[18px]">{label}</div>
      <ArrowBtn cls="mt-[2px]" />
      <Input value={value} cls="ml-[3px] w-[104px] h-[21px]" />
    </div>
  );
}
function WideRow({ label, value, sel, w }: { label: string; value?: string; sel?: string; w: string }) {
  return (
    <div className="h-[25px] flex pl-[11px]">
      <div className="w-[211px] shrink-0 leading-[16px]">{label}</div>
      <ArrowBtn cls="mt-[2px]" />
      <Input value={value} cls={`ml-[3px] ${w} h-[22px]`} />
      <Select value={sel} />
    </div>
  );
}
function DecRow({ label, focus }: { label: string; focus?: boolean }) {
  return (
    <div className="h-[22px] flex pl-[10px]">
      <div className="w-[209px] h-[20px] shrink-0 bg-[#f0f0f0] leading-[18px]">{label}</div>
      <ArrowBtn cls="ml-[3px] mt-[1px]" focus={focus} />
      <Input cls="ml-[3px] w-[104px] h-[22px]" />
    </div>
  );
}
function DlgBtn({ t, cls }: { t: string; cls: string }) {
  return <div className={`${cls} shrink-0 bg-[#e1e1e1] border border-[#adadad] flex items-center justify-center text-[13.3px] text-[#111]`}>{t}</div>;
}

function Panel() {
  return (
    <div className="absolute left-[1275px] top-[17px] w-[529px] h-[822px] z-10 rounded-t-[7px] border border-b-0 border-[#3a3f45] bg-[#d6e4f2] flex flex-col font-['Liberation_Sans',sans-serif] text-[13px] text-[#1a1a1a]">
      <div className="h-[37px] shrink-0 rounded-t-[6px] bg-[linear-gradient(to_bottom,#b6cbdf,#d3e1ee)] flex items-start justify-between pl-[12px] pr-[11px]">
        <div className="mt-[14px] leading-[18px] text-[14.5px] text-[#98a3ae] whitespace-nowrap">QDV Tools for Excel</div>
        <div className="mt-[10px] w-[41px] h-[24px] rounded-[2px] border border-[#6f7f92] bg-[linear-gradient(to_bottom,#d0dbe6,#a9bacb)] flex items-center justify-center">
          <svg width="20" height="16" viewBox="0 0 20 16">
            <path d="M2 2l16 12M18 2L2 14" stroke="#4d5864" strokeWidth="5" />
            <path d="M2 2l16 12M18 2L2 14" stroke="#fff" strokeWidth="3" />
          </svg>
        </div>
      </div>
      <div className="ml-[9px] mr-[11px] flex-1 flex flex-col bg-white relative">
        <div className="h-[24px] shrink-0 flex items-end bg-[#f0f0f0] text-[13.3px]">
          <div className="w-[85px] h-[24px] bg-white border-t border-r border-[#d9d9d9] flex justify-center pt-[2px] leading-[16px] text-[#111]">Parametres</div>
          <div className="w-[76px] h-[22px] border-r border-t border-b border-[#d9d9d9] flex items-center justify-center">Répartition</div>
          <div className="w-[88px] h-[22px] border-r border-t border-b border-[#d9d9d9] flex items-center justify-center">Organisation</div>
          <div className="w-[66px] h-[22px] border-r border-t border-b border-[#d9d9d9] flex items-center justify-center">Selection</div>
          <div className="flex-1 h-[22px] border-b border-[#d9d9d9]" />
        </div>
        <div className="mt-[6px] h-[37px] shrink-0 flex items-center pl-[9px]">
          <DlgBtn t="Sauver" cls="w-[79px] h-[34px]" />
          <DlgBtn t="Options" cls="ml-[22px] w-[81px] h-[37px]" />
          <DlgBtn t="Exporter" cls="ml-[143px] w-[79px] h-[34px]" />
          <DlgBtn t="Importer" cls="ml-[9px] w-[79px] h-[34px]" />
        </div>
        <Heading t="Paramètres de feuille" cls="mt-[14px]" />
        <div className="mt-[3px]">
          <PlainRow label="Templace sheet" value="Model" />
          <PlainRow label="Column to delete during copy" value="$Q:$Q" />
          <PlainRow label="Première ligne à dupliquer" value="$8:$8" />
          <PlainRow label="Total calculé" value="$P$19" />
        </div>
        <HeadingRow t="Paramètres généraux" cls="mt-[12px]" btn="mt-[2px]" />
        <Heading t="WBS" cls="mt-[15px]" />
        <div className="mt-[1px]">
          <WideRow label="Item" value="$B$3:$E$3" sel="WBS_Item" w="w-[104px]" />
          <WideRow label="Description" value="$B$4:$E$4" sel="WBS_Description" w="w-[104px]" />
          <WideRow label="Unité" value="$G$4" sel="WBS_Unit" w="w-[104px]" />
          <WideRow label="Quantité" value="$G$3" sel="WBS_Quantity" w="w-[104px]" />
          <WideRow label="Prix unitaire de vente" w="w-[104px]" />
        </div>
        <HeadingRow t="Colonnes supplémentaires du WBS" cls="" btn="mt-[1px]" />
        <div className="mt-[16px] ml-[13px] h-[17px] leading-[18px] font-bold text-[13.7px] text-[#1279e0]">Minutes</div>
        <WideRow label="Colonne description" value="$A:$A" sel="Description" w="w-[104px]" />
        <WideRow label="Colonne unité" value="$B:$B" sel="Unit" w="w-[104px]" />
        <WideRow label="Colonne quantité" value="$C:$C" sel="Quantity" w="w-[104px]" />
        <DecRow label="First column to decompose" focus />
        <DecRow label="Second column to decompose" />
        <DecRow label="Third column to decompose" />
        <DecRow label="Fourth column to decompose" />
        <DecRow label="Fifth column to decompose" />
        <DecRow label="Sixth column to decompose" />
        <HeadingRow t="Colonnes supplémentaires de Minutes" cls="" btn="mt-[1px]" />
        <HeadingRow t="Algorithmes" cls="mt-[12px]" btn="mt-[2px]" />
        <HeadingRow t="Coefficients" cls="mt-[13px]" btn="mt-[2px]" />
      </div>
      <div className="absolute left-[0px] right-[0px] top-[143px] h-[7px] bg-[linear-gradient(to_bottom,rgba(0,0,0,0.09),rgba(0,0,0,0))] pointer-events-none" />
    </div>
  );
}

export default function App() {
  return (
    <div className="relative w-[1811px] h-[839px] overflow-hidden bg-[#e6e6e6]">
      <div className="h-[3px] bg-[#217346]" />
      <Ribbon />
      <FormulaBar />
      <Sheet />
      <BottomBar />
      <Panel />
    </div>
  );
}
